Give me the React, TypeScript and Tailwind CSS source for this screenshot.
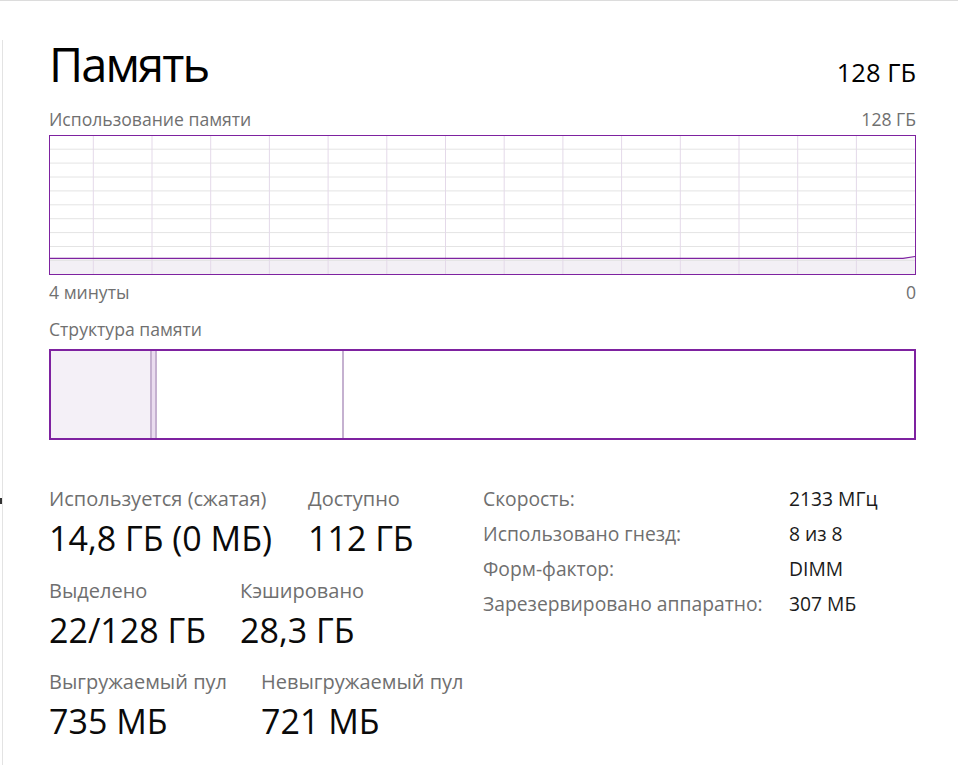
import React from "react";

const PURPLE = "#7e22a0";

function UsageGraph() {
  const W = 867;
  const H = 140;
  const vx: number[] = [];
  for (let k = 0; k < 14; k++) vx.push(44.3 + k * 58.7);
  const hy: number[] = [];
  for (let k = 0; k < 9; k++) hy.push(14.2 + k * 13.9);
  const lineY = 123.3;
  return (
    <svg width={W} height={H} viewBox={`0 0 ${W} ${H}`} className="block">
      <rect x={0} y={0} width={W} height={H} fill="#ffffff" />
      <path
        d={`M1 ${lineY} L854 ${lineY} L866 ${lineY - 1.8} L866 ${H - 1} L1 ${H - 1} Z`}
        fill="#f3f0f5"
      />
      {hy.map((y, i) => (
        <line key={"h" + i} x1={1} x2={W - 1} y1={y} y2={y} stroke="#e4e4e4" strokeWidth={1} />
      ))}
      {vx.map((x, i) => (
        <line key={"v" + i} x1={x} x2={x} y1={1} y2={H - 1} stroke="#e4d9e9" strokeWidth={1} />
      ))}
      <path
        d={`M1 ${lineY} L854 ${lineY} L866 ${lineY - 1.8}`}
        fill="none"
        stroke={PURPLE}
        strokeWidth={1.2}
      />
      <rect x={0.5} y={0.5} width={W - 1} height={H - 1} fill="none" stroke={PURPLE} strokeWidth={1} />
    </svg>
  );
}

function Structure() {
  return (
    <div className="flex w-[867px] h-[91px] border-2 border-[#7e22a0]">
      <div className="w-[101px] h-full bg-[#f4f0f7] border-r-2 border-[#c5b1d0]" />
      <div className="w-[5px] h-full bg-[#eadcef] border-r-2 border-[#c5b1d0]" />
      <div className="w-[187px] h-full bg-white border-r-2 border-[#c5b1d0]" />
      <div className="flex-1 h-full bg-white" />
    </div>
  );
}

function Stat({ label, value, w }: { label: string; value: string; w: string }) {
  return (
    <div className={w}>
      <div className="text-[20px] leading-[24px] text-[#6f6f6f] whitespace-nowrap">{label}</div>
      <div className="mt-[7px] text-[34px] leading-[40px] text-[#0a0a0a] whitespace-nowrap">{value}</div>
    </div>
  );
}

export default function App() {
  const rows: [string, string][] = [
    ["Скорость:", "2133 МГц"],
    ["Использовано гнезд:", "8 из 8"],
    ["Форм-фактор:", "DIMM"],
    ["Зарезервировано аппаратно:", "307 МБ"],
  ];
  return (
    <div
      className="relative w-[958px] h-[765px] bg-white border-t border-[#dcdcdc] overflow-hidden"
      style={{ fontFamily: '"Open Sans", "Noto Sans", sans-serif' }}
    >
      <div className="absolute left-0 top-[497px] w-[2px] h-[6px] bg-[#333]" />
      <div className="mt-[39px] ml-[2px] h-[725px] border-l border-[#e3e3e3] pl-[46px]">
        <div className="flex items-baseline justify-between w-[867px] h-[48px]">
          <div className="text-[47px] leading-[48px] tracking-[-1.9px] text-black">Память</div>
          <div className="text-[25.5px] leading-[48px] text-black">128 ГБ</div>
        </div>

        <div className="mt-[21px] flex justify-between w-[867px] text-[17.6px] leading-[20px] text-[#707070]">
          <span>Использование памяти</span>
          <span>128 ГБ</span>
        </div>

        <div className="mt-[6px]">
          <UsageGraph />
        </div>

        <div className="mt-[7px] flex justify-between w-[867px] text-[17.6px] leading-[20px] text-[#707070]">
          <span>4 минуты</span>
          <span>0</span>
        </div>

        <div className="mt-[17px] text-[17.6px] leading-[20px] text-[#707070]">Структура памяти</div>

        <div className="mt-[10px]">
          <Structure />
        </div>

        <div className="mt-[42px] flex">
          <div className="w-[434px] pt-[5px]">
            <div className="flex">
              <Stat w="w-[259px]" label="Используется (сжатая)" value="14,8 ГБ (0 МБ)" />
              <Stat w="" label="Доступно" value="112 ГБ" />
            </div>
            <div className="flex mt-[21px]">
              <Stat w="w-[191px]" label="Выделено" value="22/128 ГБ" />
              <Stat w="" label="Кэшировано" value="28,3 ГБ" />
            </div>
            <div className="flex mt-[20px]">
              <Stat w="w-[212px]" label="Выгружаемый пул" value="735 МБ" />
              <Stat w="" label="Невыгружаемый пул" value="721 МБ" />
            </div>
          </div>
          <div className="flex flex-col -mt-[1px]">
            {rows.map(([l, v]) => (
              <div key={l} className="flex h-[35px] text-[19.3px] leading-[35px]">
                <div className="w-[306px] text-[#6f6f6f] whitespace-nowrap">{l}</div>
                <div className="text-[#1b1b1b] whitespace-nowrap">{v}</div>
              </div>
            ))}
          </div>
        </div>
      </div>
    </div>
  );
}
